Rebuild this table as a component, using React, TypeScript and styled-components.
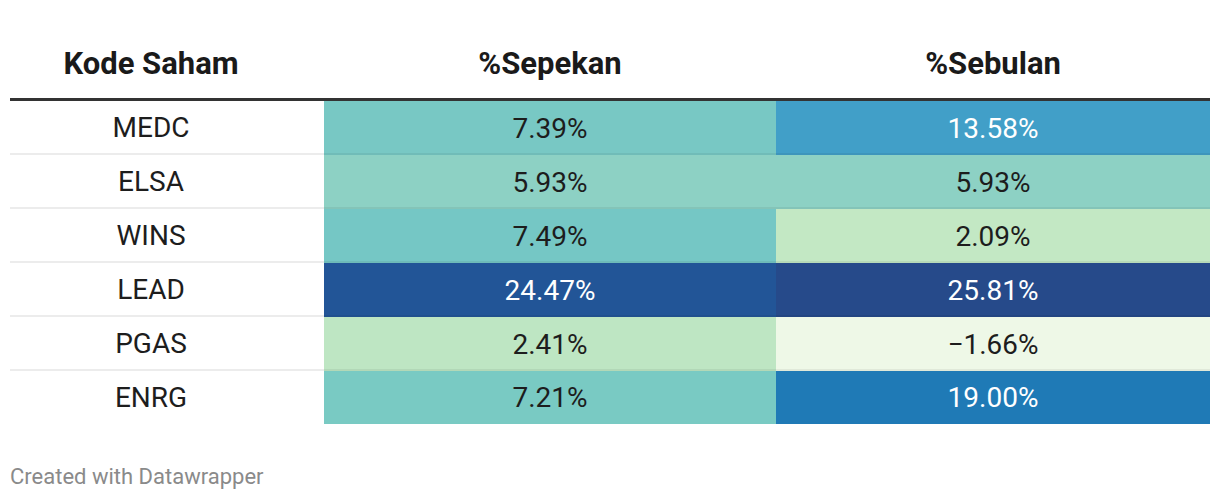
import React from 'react'
import styled, { createGlobalStyle } from 'styled-components'

interface Row {
  code: string
  week: string
  month: string
  weekBg: string
  monthBg: string
}

const rows: Row[] = [
  { code: 'MEDC', week: '7.39%', month: '13.58%', weekBg: '#78c8c4', monthBg: '#419fc8' },
  { code: 'ELSA', week: '5.93%', month: '5.93%', weekBg: '#8dd1c4', monthBg: '#8dd1c4' },
  { code: 'WINS', week: '7.49%', month: '2.09%', weekBg: '#75c7c5', monthBg: '#c3e8c4' },
  { code: 'LEAD', week: '24.47%', month: '25.81%', weekBg: '#225597', monthBg: '#264a8a' },
  { code: 'PGAS', week: '2.41%', month: '\u22121.66%', weekBg: '#bee6c3', monthBg: '#eef8e7' },
  { code: 'ENRG', week: '7.21%', month: '19.00%', weekBg: '#79cac3', monthBg: '#1f7ab6' },
]

const isDark = (hex: string) => {
  const n = parseInt(hex.slice(1), 16)
  const r = (n >> 16) & 255
  const g = (n >> 8) & 255
  const b = n & 255
  return 0.299 * r + 0.587 * g + 0.114 * b < 150
}

const App: React.FC = () => {
  return (
    <>
      <GlobalStyle />
      <Page>
        <Table>
          <HeadCell $pad>Kode Saham</HeadCell>
          <HeadCell>%Sepekan</HeadCell>
          <HeadCell>%Sebulan</HeadCell>
          {rows.map((row, i) => {
            const last = i === rows.length - 1
            return (
              <React.Fragment key={row.code}>
                <CodeCell $last={last}>{row.code}</CodeCell>
                <ValueCell $bg={row.weekBg} $light={isDark(row.weekBg)} $last={last}>
                  {row.week}
                </ValueCell>
                <ValueCell $bg={row.monthBg} $light={isDark(row.monthBg)} $last={last}>
                  {row.month}
                </ValueCell>
              </React.Fragment>
            )
          })}
        </Table>
        <Footer>Created with Datawrapper</Footer>
      </Page>
    </>
  )
}

const GlobalStyle = createGlobalStyle`
  body {
    margin: 0;
    background: #ffffff;
    font-family: Roboto, "Liberation Sans", sans-serif;
  }
`

const Page = styled.div`
  width: 1220px;
  height: 500px;
  padding: 0 10px;
  box-sizing: border-box;
  display: flex;
  flex-direction: column;
`

const Table = styled.div`
  display: grid;
  grid-template-columns: 314px 452px 434px;
  color: #1d1d1d;
  font-variant-numeric: tabular-nums;
`

const HeadCell = styled.div<{ $pad?: boolean }>`
  height: 101px;
  box-sizing: border-box;
  padding: 44px ${(p) => (p.$pad ? '32px' : '0')} 0 0;
  text-align: center;
  font-size: 31px;
  line-height: 40px;
  font-weight: 700;
  color: #1a1a1a;
  border-bottom: 3px solid #333333;
`

const CodeCell = styled.div<{ $last: boolean }>`
  height: ${(p) => (p.$last ? '53px' : '54px')};
  box-sizing: border-box;
  padding-right: 32px;
  display: flex;
  align-items: center;
  justify-content: center;
  font-size: 28px;
  border-bottom: ${(p) => (p.$last ? 'none' : '2px solid #ececec')};
`

const ValueCell = styled.div<{ $bg: string; $light: boolean; $last: boolean }>`
  height: ${(p) => (p.$last ? '53px' : '54px')};
  box-sizing: border-box;
  display: flex;
  align-items: center;
  justify-content: center;
  font-size: 28px;
  background: ${(p) => p.$bg};
  color: ${(p) => (p.$light ? '#ffffff' : '#1d1d1d')};
  box-shadow: ${(p) => (p.$last ? 'none' : 'inset 0 -2px 0 rgba(0, 0, 0, 0.06)')};
`

const Footer = styled.div`
  margin-top: 40px;
  font-size: 22px;
  color: #8a8a8a;
`

export default App
